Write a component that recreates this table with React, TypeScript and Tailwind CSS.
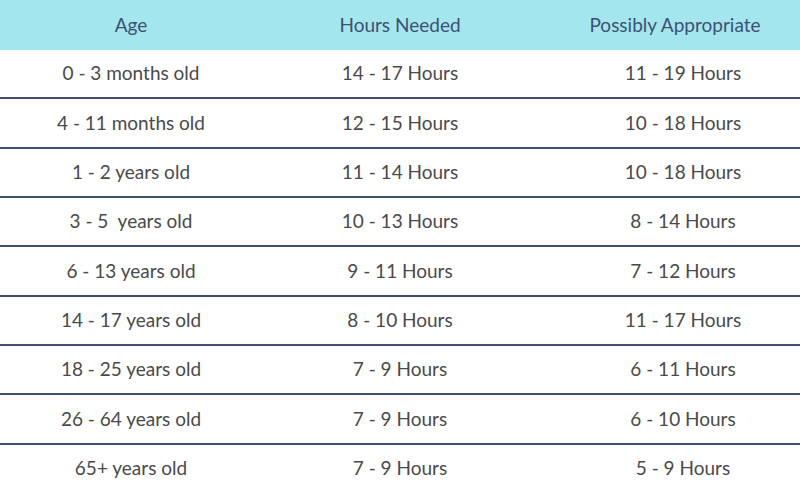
import React from "react";

const rows: [string, string, string][] = [
  ["0 - 3 months old", "14 - 17 Hours", "11 - 19 Hours"],
  ["4 - 11 months old", "12 - 15 Hours", "10 - 18 Hours"],
  ["1 - 2 years old", "11 - 14 Hours", "10 - 18 Hours"],
  ["3 - 5\u00a0 years old", "10 - 13 Hours", "8 - 14 Hours"],
  ["6 - 13 years old", "9 - 11 Hours", "7 - 12 Hours"],
  ["14 - 17 years old", "8 - 10 Hours", "11 - 17 Hours"],
  ["18 - 25 years old", "7 - 9 Hours", "6 - 11 Hours"],
  ["26 - 64 years old", "7 - 9 Hours", "6 - 10 Hours"],
  ["65+ years old", "7 - 9 Hours", "5 - 9 Hours"],
];

export default function App() {
  return (
    <div
      className="w-[800px] h-[492px] flex flex-col bg-white text-[19px]"
      style={{ fontFamily: "Lato, 'Open Sans', sans-serif" }}
    >
      <div className="h-[50px] shrink-0 bg-[#a3e6ee] text-[#3e5172] grid grid-cols-[262px_288px_250px] items-center">
        <div className="text-center">Age</div>
        <div className="text-center pr-3">Hours Needed</div>
        <div className="text-center">Possibly Appropriate</div>
      </div>
      {rows.map((r, i) => (
        <div
          key={i}
          className={
            "flex-1 basis-0 grid grid-cols-[262px_288px_250px] items-center text-[#4a4a4a] " +
            (i < rows.length - 1 ? "border-b-2 border-[#3f5170]" : "")
          }
        >
          <div className="text-center">{r[0]}</div>
          <div className="text-center pr-3">{r[1]}</div>
          <div className="text-center pl-4">{r[2]}</div>
        </div>
      ))}
    </div>
  );
}
